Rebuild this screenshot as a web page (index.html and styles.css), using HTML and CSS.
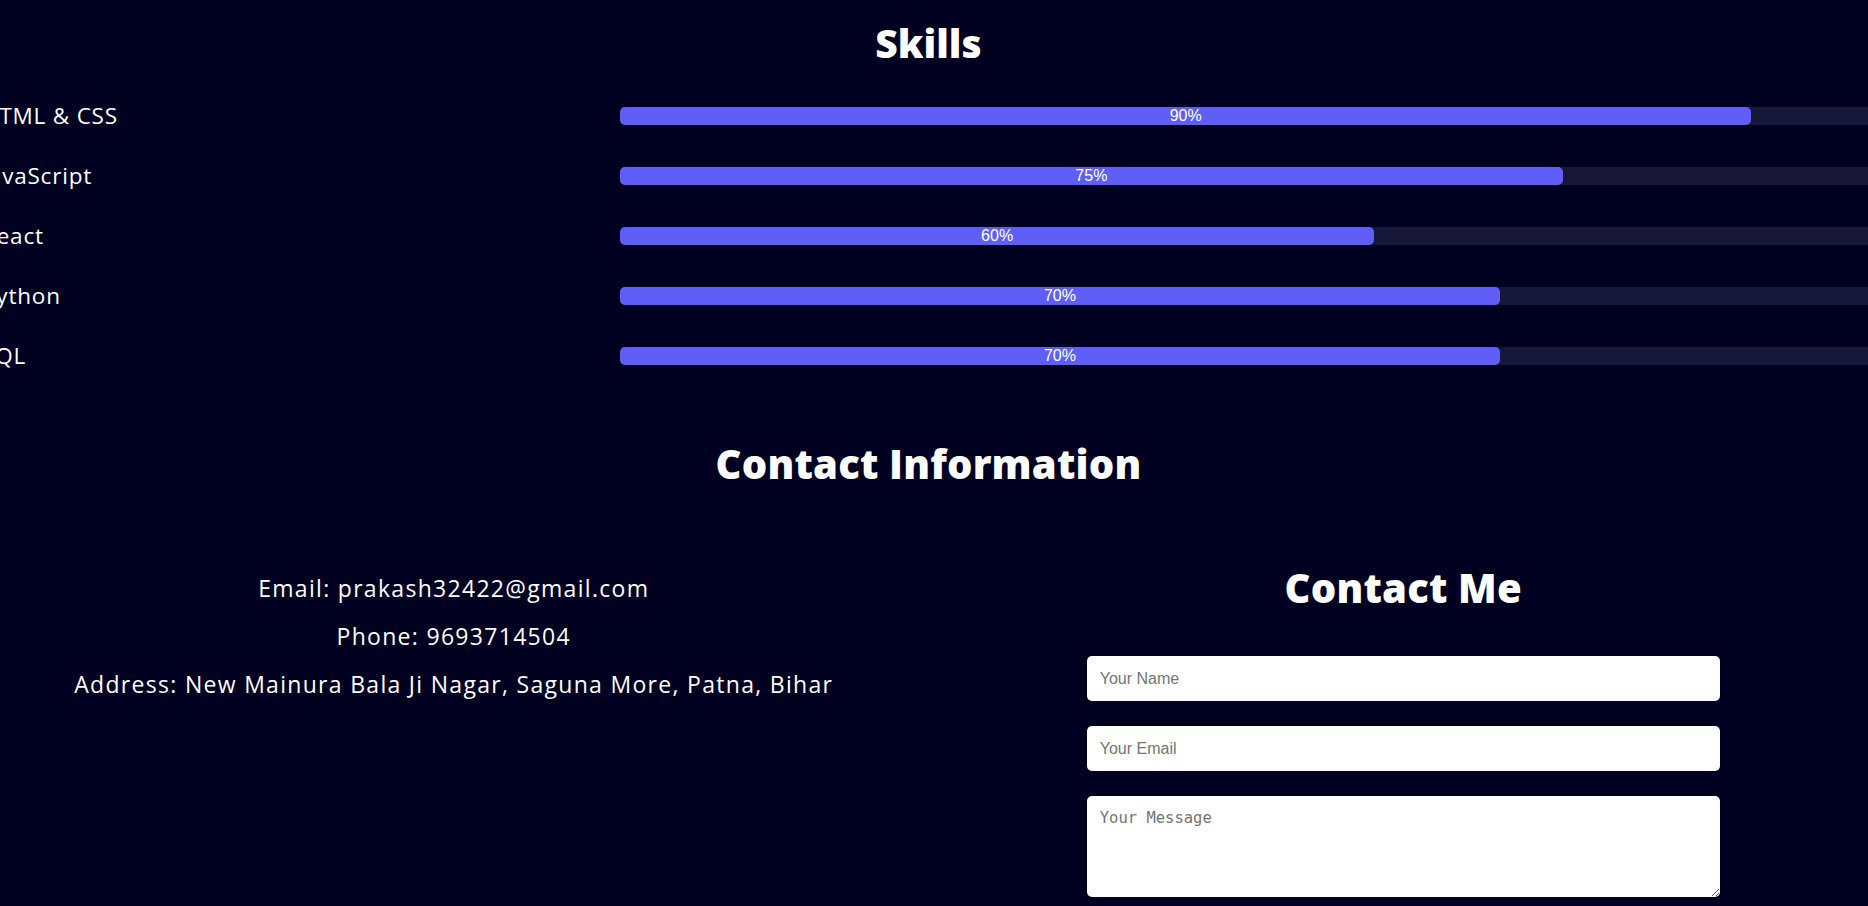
FILE: index.html
```html
<!DOCTYPE html>
<html lang="en">
<head>
<meta charset="utf-8">
<title>Skills and Contact</title>
<link rel="stylesheet" href="styles.css">
</head>
<body>
<main class="page">
  <section class="skills">
    <h2 class="section-title skills-title">Skills</h2>
    <div class="skill-list">
      <div class="skill">
        <span class="skill-name">HTML &amp; CSS</span>
        <div class="track"><div class="fill" style="width:90%"><span>90%</span></div></div>
      </div>
      <div class="skill">
        <span class="skill-name">JavaScript</span>
        <div class="track"><div class="fill" style="width:75%"><span>75%</span></div></div>
      </div>
      <div class="skill">
        <span class="skill-name">React</span>
        <div class="track"><div class="fill" style="width:60%"><span>60%</span></div></div>
      </div>
      <div class="skill">
        <span class="skill-name">Python</span>
        <div class="track"><div class="fill" style="width:70%"><span>70%</span></div></div>
      </div>
      <div class="skill">
        <span class="skill-name">SQL</span>
        <div class="track"><div class="fill" style="width:70%"><span>70%</span></div></div>
      </div>
    </div>
  </section>

  <section class="contact">
    <h2 class="section-title">Contact Information</h2>
    <div class="contact-grid">
      <div class="contact-info">
        <p>Email: prakash32422@gmail.com</p>
        <p>Phone: 9693714504</p>
        <p>Address: New Mainura Bala Ji Nagar, Saguna More, Patna, Bihar</p>
      </div>
      <div class="contact-form-wrap">
        <h2 class="section-title form-title">Contact Me</h2>
        <form class="contact-form">
          <input type="text" class="field" placeholder="Your Name">
          <input type="email" class="field" placeholder="Your Email">
          <textarea class="field message" placeholder="Your Message"></textarea>
        </form>
      </div>
    </div>
  </section>
</main>
</body>
</html>
```
FILE: styles.css
```css
html, body {
  margin: 0;
  padding: 0;
  overflow: hidden;
  height: 100%;
}

body {
  background: #000020;
  color: #ffffff;
  font-family: "Open Sans", "DejaVu Sans", sans-serif;
}

.page {
  width: 1857px;
}

.section-title {
  margin: 0;
  font-family: "Open Sans", "DejaVu Sans", sans-serif;
  font-weight: 800;
  font-size: 40px;
  line-height: 48px;
  text-align: center;
  letter-spacing: 0.2px;
}

.skills-title {
  font-size: 39px;
  letter-spacing: 0;
}

.skills {
  padding-top: 19px;
}

.skill-list {
  margin-top: 19px;
  margin-left: -18px;
  width: 1895px;
}

.skill {
  display: grid;
  grid-template-columns: 638px 1257px;
  align-items: center;
  height: 60px;
}

.skill-name {
  font-size: 22.5px;
  letter-spacing: 0.8px;
  line-height: 60px;
  white-space: nowrap;
}

.track {
  height: 18px;
  background: #17173a;
  border-radius: 5px;
}

.fill {
  height: 100%;
  background: #5f5ff8;
  border-radius: 5px;
  display: flex;
  align-items: center;
  justify-content: center;
  font-family: "Liberation Sans", Arial, sans-serif;
  font-size: 16px;
  line-height: 1;
  color: #ffffff;
}

.contact {
  margin-top: 54px;
}

.contact-grid {
  display: grid;
  grid-template-columns: 1fr 1fr;
  column-gap: 42px;
  margin-top: 40px;
}

.contact-info {
  padding-top: 36px;
  text-align: center;
}

.contact-info p {
  margin: 0;
  font-size: 23px;
  letter-spacing: 1.3px;
  line-height: 48px;
}

.form-title {
  margin-top: 36px;
}

.contact-form {
  width: 633px;
  margin: 44px auto 0;
  display: flex;
  flex-direction: column;
  gap: 25px;
}

.field {
  box-sizing: border-box;
  width: 100%;
  height: 45px;
  border: none;
  border-radius: 5px;
  background: #ffffff;
  padding: 12px 13px;
  font-family: "Liberation Sans", Arial, sans-serif;
  font-size: 16px;
  color: #222;
  outline: none;
}

.field::placeholder {
  color: #757575;
}

.message {
  height: 101px;
  padding: 13px 13px;
  font-family: "DejaVu Sans Mono", monospace;
  font-size: 15.5px;
  resize: vertical;
}
```
